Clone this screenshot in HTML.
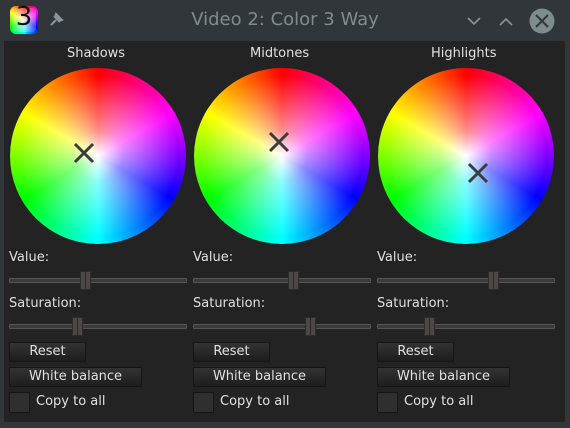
<!DOCTYPE html>
<html><head><style>
*{margin:0;padding:0;box-sizing:border-box}
body{width:570px;height:428px;background:#31363b;font-family:"DejaVu Sans","Liberation Sans",sans-serif;position:relative;overflow:hidden;color:#e6e6e6}
.title{position:absolute;left:0;top:0;width:570px;height:41px}
.title .t{position:absolute;left:0;width:570px;top:9px;text-align:center;font-size:18px;color:#7f8c8d}
.panel{position:absolute;left:4px;top:41px;width:561px;height:381px;background:#232323}
.abs{position:absolute}
.lbl{position:absolute;font-size:13px;color:#e0e0e0}
.wheel{position:absolute;width:176px;height:176px;border-radius:50%;top:68px;
background:radial-gradient(circle,#fff 0%,rgba(255,255,255,.55) 20%,rgba(255,255,255,0) 65%),conic-gradient(#f00,#f0f 60deg,#00f 120deg,#0ff 180deg,#0f0 240deg,#ff0 300deg,#f00 360deg);}
.track{position:absolute;height:5px;width:178px;background:#3a3a3a;border:1px solid #555;border-radius:1px}
.hdl{position:absolute;width:11px;height:19px;background:#4d4848;border:1px solid #2e2b2b}
.hdl:after{content:"";position:absolute;left:4px;top:0;width:1px;height:17px;background:#2a2828}
.btn{position:absolute;height:20px;background:linear-gradient(#333,#1e1e1e);border:1px solid #151515;font-size:13px;text-align:center;line-height:18px;color:#e0e0e0}
.cb{position:absolute;width:21px;height:21px;background:#2f2f2f;border:1px solid #151515}
</style></head><body>
<div class="title">
<div class="abs" style="left:10px;top:6px;width:28px;height:28px;border-radius:6px;background:conic-gradient(#f00,#f0f,#00f,#0ff,#0f0,#ff0,#f00);"></div>
<div class="abs" style="left:12px;top:8px;width:24px;height:24px;border-radius:4px;background:radial-gradient(circle,rgba(255,255,255,.9),rgba(255,255,255,.2) 80%)"></div>
<div class="abs" style="left:10px;top:2px;width:28px;text-align:center;font-size:26px;color:#111">3</div>
<svg class="abs" style="left:48px;top:10px" width="18" height="18" viewBox="0 0 18 18"><path d="M3 15 L8 10 M6 6 L12 12 M8 4 L14 10 L11 11 L7 7 Z" stroke="#8a9499" stroke-width="2" fill="#8a9499"/></svg>
<div class="t">Video 2: Color 3 Way</div>
<svg class="abs" style="left:464px;top:6px" width="100" height="30"><path d="M4 12 L10 18 L16 12" stroke="#8a9499" stroke-width="1.6" fill="none"/><path d="M36 19 L42 13 L48 19" stroke="#8a9499" stroke-width="1.6" fill="none"/><circle cx="78" cy="15" r="12.5" fill="#7f8c8d"/><path d="M72 9 L84 21 M84 9 L72 21" stroke="#31363b" stroke-width="2"/></svg>
</div>
<div class="panel"></div>

<div class="lbl" style="left:67px;top:46px">Shadows</div>
<div class="lbl" style="left:250px;top:46px">Midtones</div>
<div class="lbl" style="left:431px;top:46px">Highlights</div>

<div class="wheel" style="left:10px"></div>
<div class="wheel" style="left:194px"></div>
<div class="wheel" style="left:378px"></div>
<svg class="abs" style="left:0;top:0" width="570" height="428">
<g stroke="#3c3c3c" stroke-width="3"><path d="M75 144 L93 162 M93 144 L75 162"/><path d="M270 133 L288 151 M288 133 L270 151"/><path d="M469 164 L487 182 M487 164 L469 182"/></g>
</svg>

<div class="lbl" style="left:9px;top:250px">Value:</div>
<div class="lbl" style="left:193px;top:250px">Value:</div>
<div class="lbl" style="left:377px;top:250px">Value:</div>
<div class="track" style="left:9px;top:278px"></div>
<div class="track" style="left:193px;top:278px"></div>
<div class="track" style="left:377px;top:278px"></div>
<div class="hdl" style="left:80px;top:271px"></div>
<div class="hdl" style="left:288px;top:271px"></div>
<div class="hdl" style="left:488px;top:271px"></div>

<div class="lbl" style="left:9px;top:296px">Saturation:</div>
<div class="lbl" style="left:193px;top:296px">Saturation:</div>
<div class="lbl" style="left:377px;top:296px">Saturation:</div>
<div class="track" style="left:9px;top:324px"></div>
<div class="track" style="left:193px;top:324px"></div>
<div class="track" style="left:377px;top:324px"></div>
<div class="hdl" style="left:72px;top:317px"></div>
<div class="hdl" style="left:305px;top:317px"></div>
<div class="hdl" style="left:424px;top:317px"></div>

<div class="btn" style="left:9px;top:342px;width:77px">Reset</div>
<div class="btn" style="left:193px;top:342px;width:77px">Reset</div>
<div class="btn" style="left:377px;top:342px;width:77px">Reset</div>
<div class="btn" style="left:9px;top:367px;width:133px">White balance</div>
<div class="btn" style="left:193px;top:367px;width:133px">White balance</div>
<div class="btn" style="left:377px;top:367px;width:133px">White balance</div>
<div class="cb" style="left:9px;top:392px"></div>
<div class="cb" style="left:193px;top:392px"></div>
<div class="cb" style="left:377px;top:392px"></div>
<div class="lbl" style="left:36px;top:394px">Copy to all</div>
<div class="lbl" style="left:220px;top:394px">Copy to all</div>
<div class="lbl" style="left:404px;top:394px">Copy to all</div>
</body></html>
